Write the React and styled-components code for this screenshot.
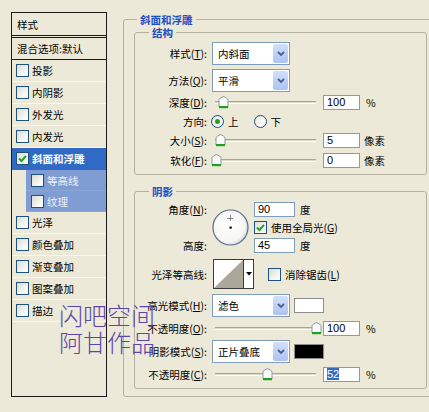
import React from "react";
import styled, { createGlobalStyle, css } from "styled-components";

const GlobalStyle = createGlobalStyle`
  html, body { margin: 0; padding: 0; background: #ECE9D8; overflow: hidden; }
  body {
    font-family: "Noto Sans CJK SC", "Noto Sans", sans-serif;
    font-size: 10.5px;
    color: #000;
  }
`;

const Root = styled.div`
  position: relative;
  width: 429px;
  height: 412px;
  display: flex;
  align-items: flex-start;
  overflow: hidden;
  background: #ECE9D8;
`;

/* ---------- left style list ---------- */
const LeftCol = styled.div`
  padding: 12px 0 0 11px;
  flex-shrink: 0;
`;

const Panel = styled.div`
  width: 96px;
  height: 385px;
  box-sizing: border-box;
  border: 1px solid #1a1a1a;
  display: flex;
  flex-direction: column;
`;

const PanelHeader = styled.div`
  height: 25px;
  box-sizing: border-box;
  border-bottom: 3px double #1a1a1a;
  display: flex;
  align-items: center;
  padding-left: 5px;
`;

const BlendRow = styled.div`
  height: 22px;
  box-sizing: border-box;
  border-bottom: 1px solid #1a1a1a;
  display: flex;
  align-items: center;
  padding-left: 5px;
`;

const ListRow = styled.div`
  height: ${(p) => (p.$sub ? 21 : 22)}px;
  box-sizing: border-box;
  display: flex;
  align-items: center;
  gap: 3px;
  padding-left: 4px;
  border-bottom: 1px solid #f7f6ef;
  white-space: nowrap;
  ${(p) =>
    p.$selected &&
    css`
      background: #316ac5;
      color: #fff;
      font-weight: bold;
      border-bottom-color: #316ac5;
    `}
  ${(p) =>
    p.$sub &&
    css`
      margin-left: 14px;
      padding-left: 5px;
      background: #7f9cd3;
      color: #eef1fa;
      border-bottom-color: #8aa5d8;
    `}
`;

const CheckBox = styled.span`
  width: 13px;
  height: 13px;
  box-sizing: border-box;
  flex-shrink: 0;
  border: 1px solid #1c5180;
  background: linear-gradient(135deg, #dcdcd5 0%, #f4f4f0 60%, #ffffff 100%);
  display: inline-flex;
  align-items: center;
  justify-content: center;
`;

const Check = ({ checked }) => (
  <CheckBox>
    {checked && (
      <svg width="9" height="9" viewBox="0 0 9 9">
        <path d="M1 4.5 L3.5 7 L8 1.8" fill="none" stroke="#21a121" strokeWidth="2" />
      </svg>
    )}
  </CheckBox>
);

/* ---------- group boxes ---------- */
const OuterBox = styled.fieldset`
  margin: 13px 0 0 16px;
  width: 312px;
  flex-shrink: 0;
  min-width: 0;
  box-sizing: border-box;
  padding: 0 0 7px 10px;
  border: 1px solid #b3b0a0;
  border-radius: 3px;
`;

const InnerBox = styled.fieldset`
  margin: ${(p) => p.$mt || 0}px 0 0 0;
  width: 293px;
  min-width: 0;
  box-sizing: border-box;
  padding: 3px 0 6px 0;
  border: 1px solid #b3b0a0;
  border-radius: 3px;
`;

const Title = styled.legend`
  margin-left: ${(p) => p.$ml}px;
  padding: 0 3px;
  font-weight: bold;
  color: #1f4fc4;
  line-height: 13px;
  font-size: 10.5px;
`;

/* ---------- form parts ---------- */
const FormRow = styled.div`
  display: flex;
  align-items: center;
  height: ${(p) => p.$h}px;
  margin-top: ${(p) => p.$mt || 0}px;
`;

const Label = styled.span`
  width: 72px;
  flex-shrink: 0;
  margin-right: 5px;
  text-align: right;
  white-space: nowrap;
  line-height: 13px;
`;

const Select = styled.div`
  width: 78px;
  height: 23px;
  box-sizing: border-box;
  border: 1px solid #7f9db9;
  background: #fff;
  display: flex;
  align-items: center;
  justify-content: space-between;
  padding-left: 5px;
  flex-shrink: 0;
`;

const SelectBtn = styled.span`
  width: 15px;
  height: 19px;
  margin-right: 1px;
  border-radius: 2px;
  background: linear-gradient(180deg, #d2e0fc 0%, #bccff8 55%, #adc3f3 100%);
  display: flex;
  align-items: center;
  justify-content: center;
`;

const Dropdown = ({ text }) => (
  <Select>
    <span>{text}</span>
    <SelectBtn>
      <svg width="8" height="6" viewBox="0 0 8 6">
        <path d="M1 1 L4 4 L7 1" fill="none" stroke="#4d6185" strokeWidth="1.8" />
      </svg>
    </SelectBtn>
  </Select>
);

const SliderWrap = styled.div`
  position: relative;
  width: 104px;
  height: 15px;
  margin-right: 7px;
  flex-shrink: 0;
  display: flex;
  align-items: center;
`;

const Track = styled.div`
  margin-left: 3px;
  flex: 1;
  height: 1px;
  background: #dcdacb;
  border-top: 1px solid #a9a696;
  border-bottom: 1px solid #ffffff;
`;

const ThumbBox = styled.span`
  position: absolute;
  top: 1px;
  width: 11px;
  height: 13px;
`;

const Slider = ({ pos }) => (
  <SliderWrap>
    <Track />
    <ThumbBox style={{ left: `${pos - 5}px` }}>
      <svg width="11" height="13" viewBox="0 0 11 13">
        <path d="M1 4.5 Q1 3 2.5 2 L5.5 0.5 L8.5 2 Q10 3 10 4.5 V11 H1 Z" fill="#fbfbf8" stroke="#8c9aa8" strokeWidth="1" />
        <rect x="1" y="10" width="9" height="2.2" fill="#21a121" />
      </svg>
    </ThumbBox>
  </SliderWrap>
);

const Input = styled.div`
  width: 37px;
  height: 15px;
  box-sizing: border-box;
  border: 1px solid #7f9db9;
  background: #fff;
  font-family: "Liberation Sans", Arial, sans-serif;
  font-size: 11px;
  line-height: 13px;
  padding-left: 3px;
  flex-shrink: 0;
  ${(p) => p.$wide && css`width: 41px;`}
`;

const Selected = styled.span`
  background: #316ac5;
  color: #fff;
`;

const Unit = styled.span`
  margin-left: ${(p) => p.$ml || 6}px;
  white-space: nowrap;
  line-height: 13px;
`;

const RadioCircle = styled.span`
  width: 13px;
  height: 13px;
  box-sizing: border-box;
  border-radius: 50%;
  border: 1px solid #1c5180;
  background: radial-gradient(circle at 65% 65%, #ffffff 0%, #f3f3ef 50%, #dcdcd5 100%);
  display: inline-flex;
  align-items: center;
  justify-content: center;
  margin-left: ${(p) => p.$ml}px;
  flex-shrink: 0;
`;

const RadioDot = styled.span`
  width: 5px;
  height: 5px;
  border-radius: 50%;
  background: #21a121;
`;

const AngleGrid = styled.div`
  display: grid;
  grid-template-columns: 72px 37px auto;
  grid-template-rows: 16px 20px 16px;
  column-gap: 5px;
  align-items: center;
`;

const GridLabel = styled.span`
  grid-column: 1;
  grid-row: ${(p) => p.$row};
  text-align: right;
  white-space: nowrap;
  line-height: 13px;
`;

const GridCell = styled.div`
  grid-column: 3;
  grid-row: ${(p) => p.$row};
  display: flex;
  align-items: center;
`;

const DialCell = styled.div`
  grid-column: 2;
  grid-row: 1 / 4;
  align-self: center;
  width: 37px;
  height: 37px;
`;

const Contour = styled.div`
  display: flex;
  height: 30px;
  box-sizing: border-box;
  border: 1px solid #3a3a3a;
  margin-left: 1px;
  flex-shrink: 0;
`;

const ContourArrow = styled.span`
  width: 9px;
  border-left: 1px solid #3a3a3a;
  background: #fff;
  display: flex;
  align-items: center;
  justify-content: center;
`;

const CheckLabel = styled.label`
  display: flex;
  align-items: center;
  gap: 4px;
  margin-left: ${(p) => p.$ml || 0}px;
  white-space: nowrap;
  line-height: 13px;
`;

const Swatch = styled.span`
  width: 30px;
  height: 15px;
  box-sizing: border-box;
  border: 1px solid #8d8d8d;
  background: ${(p) => p.$color};
  margin-left: 4px;
  flex-shrink: 0;
`;

const Watermark = styled.div`
  position: absolute;
  left: 59px;
  top: 301px;
  font-family: "Noto Sans CJK SC", sans-serif;
  font-size: 24px;
  line-height: 27px;
  font-weight: 300;
  color: #5a46ab;
  white-space: nowrap;
  pointer-events: none;
`;

const listItems = [
  { t: "投影" },
  { t: "内阴影" },
  { t: "外发光" },
  { t: "内发光" },
  { t: "斜面和浮雕", selected: true, checked: true },
  { t: "等高线", sub: true },
  { t: "纹理", sub: true },
  { t: "光泽" },
  { t: "颜色叠加" },
  { t: "渐变叠加" },
  { t: "图案叠加" },
  { t: "描边" },
];

const L = ({ text, k, after = ":" }) => (
  <>
    {text}
    {k && (
      <>
        (<u>{k}</u>)
      </>
    )}
    {after}
  </>
);

export default function App() {
  return (
    <Root>
      <GlobalStyle />
      <LeftCol>
        <Panel>
          <PanelHeader>样式</PanelHeader>
          <BlendRow>混合选项:默认</BlendRow>
          {listItems.map((it) => (
            <ListRow key={it.t} $selected={it.selected} $sub={it.sub}>
              <Check checked={it.checked} />
              <span>{it.t}</span>
            </ListRow>
          ))}
        </Panel>
      </LeftCol>

      <OuterBox>
        <Title $ml={3}>斜面和浮雕</Title>

        <InnerBox>
          <Title $ml={14}>结构</Title>
          <FormRow $h={23}>
            <Label><L text="样式" k="T" /></Label>
            <Dropdown text="内斜面" />
          </FormRow>
          <FormRow $h={23} $mt={4}>
            <Label><L text="方法" k="Q" /></Label>
            <Dropdown text="平滑" />
          </FormRow>
          <FormRow $h={15} $mt={3}>
            <Label><L text="深度" k="D" /></Label>
            <Slider pos={11} />
            <Input>100</Input>
            <Unit>%</Unit>
          </FormRow>
          <FormRow $h={23}>
            <Label>方向:</Label>
            <RadioCircle $ml={-1}><RadioDot /></RadioCircle>
            <Unit $ml={4}>上</Unit>
            <RadioCircle $ml={15} />
            <Unit $ml={4}>下</Unit>
          </FormRow>
          <FormRow $h={15}>
            <Label><L text="大小" k="S" /></Label>
            <Slider pos={8} />
            <Input>5</Input>
            <Unit $ml={4}>像素</Unit>
          </FormRow>
          <FormRow $h={15} $mt={5}>
            <Label><L text="软化" k="F" /></Label>
            <Slider pos={4} />
            <Input>0</Input>
            <Unit $ml={4}>像素</Unit>
          </FormRow>
        </InnerBox>

        <InnerBox $mt={10}>
          <Title $ml={14}>阴影</Title>
          <AngleGrid>
            <GridLabel $row={1}><L text="角度" k="N" /></GridLabel>
            <DialCell>
              <svg width="37" height="37" viewBox="0 0 37 37">
                <defs>
                  <radialGradient id="dialg" cx="45%" cy="45%" r="60%">
                    <stop offset="0%" stopColor="#ffffff" />
                    <stop offset="75%" stopColor="#f6f6f4" />
                    <stop offset="100%" stopColor="#c9cbd6" />
                  </radialGradient>
                </defs>
                <circle cx="18.5" cy="18.5" r="17.5" fill="url(#dialg)" stroke="#5c6a8e" strokeWidth="1.2" />
                <rect x="17.5" y="17.5" width="2.2" height="2.2" fill="#000" />
                <path d="M18.5 6.5 V12.5 M15.5 9.5 H21.5" stroke="#222" strokeWidth="1" strokeDasharray="1 1" />
              </svg>
            </DialCell>
            <GridCell $row={1}>
              <Input $wide>90</Input>
              <Unit $ml={5}>度</Unit>
            </GridCell>
            <GridCell $row={2}>
              <CheckLabel>
                <Check checked />
                <span>使用全局光(<u>G</u>)</span>
              </CheckLabel>
            </GridCell>
            <GridLabel $row={3}>高度:</GridLabel>
            <GridCell $row={3}>
              <Input $wide>45</Input>
              <Unit $ml={5}>度</Unit>
            </GridCell>
          </AngleGrid>

          <FormRow $h={30} $mt={6}>
            <Label>光泽等高线:</Label>
            <Contour>
              <svg width="29" height="28" viewBox="0 0 29 28">
                <rect width="29" height="28" fill="#fff" />
                <polygon points="0,28 29,0 29,28" fill="#aca899" />
              </svg>
              <ContourArrow>
                <svg width="6" height="4" viewBox="0 0 6 4">
                  <polygon points="0,0 6,0 3,3.5" fill="#000" />
                </svg>
              </ContourArrow>
            </Contour>
            <CheckLabel $ml={14}>
              <Check />
              <span>消除锯齿(<u>L</u>)</span>
            </CheckLabel>
          </FormRow>

          <FormRow $h={23} $mt={5}>
            <Label><L text="高光模式" k="H" /></Label>
            <Dropdown text="滤色" />
            <Swatch $color="#ffffff" />
          </FormRow>
          <FormRow $h={15} $mt={4}>
            <Label><L text="不透明度" k="O" /></Label>
            <Slider pos={104} />
            <Input>100</Input>
            <Unit>%</Unit>
          </FormRow>
          <FormRow $h={23} $mt={4}>
            <Label><L text="阴影模式" k="S" /></Label>
            <Dropdown text="正片叠底" />
            <Swatch $color="#000000" />
          </FormRow>
          <FormRow $h={15} $mt={4}>
            <Label><L text="不透明度" k="C" /></Label>
            <Slider pos={55} />
            <Input><Selected>52</Selected></Input>
            <Unit>%</Unit>
          </FormRow>
        </InnerBox>
      </OuterBox>

      <Watermark>
        闪吧空间
        <br />
        阿甘作品
      </Watermark>
    </Root>
  );
}
